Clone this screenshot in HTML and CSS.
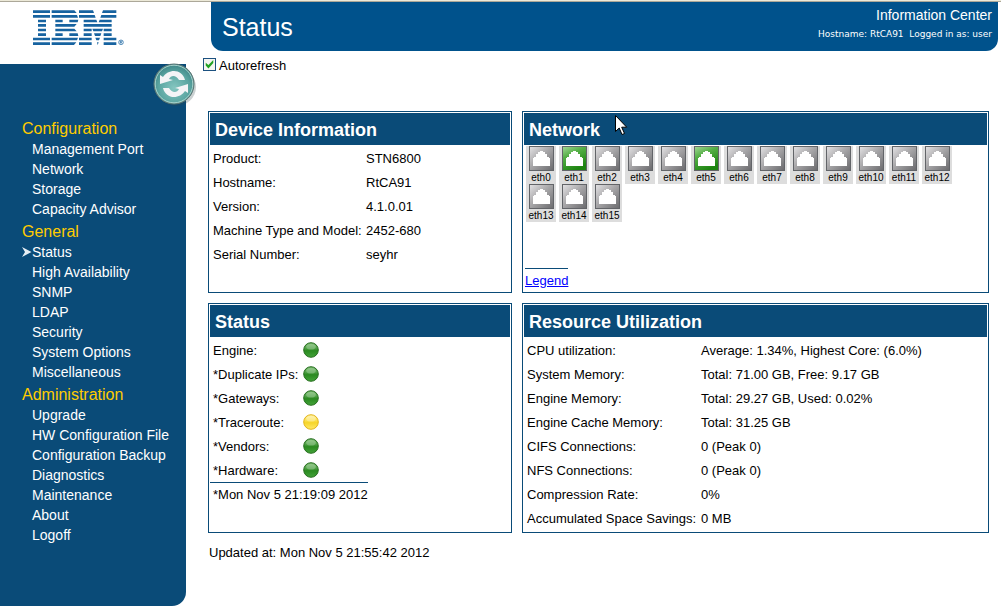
FILE: index.html
```html
<!DOCTYPE html>
<html lang="en">
<head>
<meta charset="utf-8">
<title>Information Center - Status</title>
<link rel="stylesheet" href="styles.css">
</head>
<body>
<svg class="defs" width="0" height="0" aria-hidden="true">
  <defs>
    <linearGradient id="grey" x1="0" y1="0" x2="1" y2="1"><stop offset="0" stop-color="#e4e3e5"/><stop offset=".45" stop-color="#a9a8aa"/><stop offset="1" stop-color="#69696c"/></linearGradient>
    <linearGradient id="green" x1="0" y1="0" x2="0.5" y2="1"><stop offset="0" stop-color="#a4d898"/><stop offset=".4" stop-color="#55af46"/><stop offset="1" stop-color="#1d8410"/></linearGradient>
    <linearGradient id="okball" x1="0" y1="0" x2="0" y2="1"><stop offset="0" stop-color="#78bb6c"/><stop offset=".4" stop-color="#4a9e40"/><stop offset=".55" stop-color="#2a8a20"/><stop offset="1" stop-color="#43a339"/></linearGradient>
    <linearGradient id="warnball" x1="0" y1="0" x2="0" y2="1"><stop offset="0" stop-color="#fff0a0"/><stop offset=".4" stop-color="#fbe04d"/><stop offset=".55" stop-color="#f6d52a"/><stop offset="1" stop-color="#ffe968"/></linearGradient>
    <radialGradient id="teal" cx=".5" cy=".6" r=".6"><stop offset="0" stop-color="#85c6c0"/><stop offset=".65" stop-color="#5aa5a1"/><stop offset="1" stop-color="#3d8385"/></radialGradient>
    <symbol id="port" viewBox="0 0 25 25"><rect x=".5" y=".5" width="24" height="24" stroke="#626468"/><path fill="#fff" d="M4 20V12H5V11H7V8H9V6H11V5H14V6H16V8H18V11H20V12H21V20Z"/></symbol>
    <symbol id="ok" viewBox="0 0 16 16"><circle cx="8" cy="8" r="7.3" fill="url(#okball)" stroke="#286f20"/><ellipse cx="8" cy="4.8" rx="4.8" ry="2.8" fill="#fff" opacity=".25"/></symbol>
    <symbol id="warn" viewBox="0 0 16 16"><circle cx="8" cy="8" r="7.3" fill="url(#warnball)" stroke="#e3b51a"/><ellipse cx="8" cy="4.8" rx="4.8" ry="2.8" fill="#fff" opacity=".3"/></symbol>
  </defs>
</svg>
<div class="page">
  <div class="left">
    <svg class="logo" viewBox="99 30 273 106" role="img" aria-label="IBM">
      <g fill="#1763a0">
        <path d="M99 30h51v8H99zM155 30h68l7 8H155zM237 30h42l3 8H237zM309 30h40v8H306z"/>
        <path d="M99 44h51v8H99zM155 44h76l3 8H155zM237 44h47l3 8H237zM304 44h45v8H301z"/>
        <path d="M114 58h24v8H114zM166 58h22v8H166zM208 58h27l-2 8H208zM251 58h38l3 8H251zM299 58h36v8H296z"/>
        <path d="M114 71h24v8H114zM166 71h64l-7 8H166zM251 71h43l2 5l-2 3H251zM295 71h40v8H290z"/>
        <path d="M114 85h24v8H114zM166 85h57l7 8H166zM251 85h24v8H251zM277 85h32l-3 8H280zM311 85h24v8H311z"/>
        <path d="M114 99h24v8H114zM166 99h22v8H166zM208 99h25l2 8H208zM251 99h24v8H251zM282 99h22l-3 8H285zM311 99h24v8H311z"/>
        <path d="M99 112h51v8H99zM155 112h79l-3 8H155zM237 112h38v8H237zM286 112h14l-3 8H289zM311 112h38v8H311z"/>
        <path d="M99 126h51v8H99zM155 126h74l-7 8H155zM237 126h38v8H237zM291 126h5l-3 8zM311 126h38v8H311z"/>
      </g>
      <circle cx="363" cy="126" r="7" fill="none" stroke="#1763a0" stroke-width="2"/>
      <path d="M361 130v-8h3a2 2 0 0 1 0 4h-3m3 0l2 4" fill="none" stroke="#1763a0" stroke-width="2"/>
    </svg>
    <div class="sidebar">
      <button class="refresh" type="button" aria-label="Refresh">
        <svg viewBox="0 0 44 46">
          <ellipse cx="23" cy="24" rx="20" ry="19" fill="#30484a" opacity=".25"/>
          <circle cx="21" cy="21" r="20" fill="url(#teal)" stroke="#5f7472"/>
          <circle cx="21" cy="21" r="18.8" fill="none" stroke="#a9d2cc" stroke-width="1"/>
          <path id="half" fill="#f4f4f6" d="M7 12l3 2C15 6 29 5 32 17H26C23 12 18 12 16 16l4 1-13 4z"/>
          <use href="#half" transform="rotate(180 21 21)"/>
        </svg>
      </button>
      <nav class="menu">
        <section><h2>Configuration</h2>
          <a href="#">Management Port</a><a href="#">Network</a><a href="#">Storage</a><a href="#">Capacity Advisor</a></section>
        <section><h2>General</h2>
          <a class="current" href="#" aria-current="page"><svg viewBox="0 0 10 10"><path fill="#e6eef4" d="M0 0l9.500 5-9.500 5 3-5z"/></svg>Status</a><a href="#">High Availability</a><a href="#">SNMP</a><a href="#">LDAP</a><a href="#">Security</a><a href="#">System Options</a><a href="#">Miscellaneous</a></section>
        <section><h2>Administration</h2>
          <a href="#">Upgrade</a><a href="#">HW Configuration File</a><a href="#">Configuration Backup</a><a href="#">Diagnostics</a><a href="#">Maintenance</a><a href="#">About</a><a href="#">Logoff</a></section>
      </nav>
    </div>
  </div>
  <main class="main">
    <header class="banner">
      <h1>Status</h1>
      <div class="session"><div class="product">Information Center</div><div class="user">Hostname: RtCA91 &nbsp;Logged in as: user</div></div>
    </header>
    <label class="auto"><input type="checkbox" checked>Autorefresh</label>
    <div class="panels">
      <section class="panel">
        <h2>Device Information</h2>
        <table class="device">
          <tr><th>Product:</th><td>STN6800</td></tr>
          <tr><th>Hostname:</th><td>RtCA91</td></tr>
          <tr><th>Version:</th><td>4.1.0.01</td></tr>
          <tr><th>Machine Type and Model:</th><td>2452-680</td></tr>
          <tr><th>Serial Number:</th><td>seyhr</td></tr>
        </table>
      </section>
      <section class="panel">
        <h2>Network</h2>
        <svg class="pointer" viewBox="0 0 13 21" aria-hidden="true"><path fill="#fff" stroke="#000" d="M.5 1.500v16l3.700-3.500 2.800 6.500 2.500-1-2.800-6.300h5z"/></svg>
        <ul class="ports">
          <li><svg fill="url(#grey)"><use href="#port"/></svg>eth0</li>
          <li><svg fill="url(#green)"><use href="#port"/></svg>eth1</li>
          <li><svg fill="url(#grey)"><use href="#port"/></svg>eth2</li>
          <li><svg fill="url(#grey)"><use href="#port"/></svg>eth3</li>
          <li><svg fill="url(#grey)"><use href="#port"/></svg>eth4</li>
          <li><svg fill="url(#green)"><use href="#port"/></svg>eth5</li>
          <li><svg fill="url(#grey)"><use href="#port"/></svg>eth6</li>
          <li><svg fill="url(#grey)"><use href="#port"/></svg>eth7</li>
          <li><svg fill="url(#grey)"><use href="#port"/></svg>eth8</li>
          <li><svg fill="url(#grey)"><use href="#port"/></svg>eth9</li>
          <li><svg fill="url(#grey)"><use href="#port"/></svg>eth10</li>
          <li><svg fill="url(#grey)"><use href="#port"/></svg>eth11</li>
          <li><svg fill="url(#grey)"><use href="#port"/></svg>eth12</li>
          <li><svg fill="url(#grey)"><use href="#port"/></svg>eth13</li>
          <li><svg fill="url(#grey)"><use href="#port"/></svg>eth14</li>
          <li><svg fill="url(#grey)"><use href="#port"/></svg>eth15</li>
        </ul>
        <div class="legend"><a href="#">Legend</a></div>
      </section>
      <section class="panel">
        <h2>Status</h2>
        <table class="health">
          <tr><th>Engine:</th><td><svg role="img" aria-label="OK"><use href="#ok"/></svg></td></tr>
          <tr><th>*Duplicate IPs:</th><td><svg role="img" aria-label="OK"><use href="#ok"/></svg></td></tr>
          <tr><th>*Gateways:</th><td><svg role="img" aria-label="OK"><use href="#ok"/></svg></td></tr>
          <tr><th>*Traceroute:</th><td><svg role="img" aria-label="Warning"><use href="#warn"/></svg></td></tr>
          <tr><th>*Vendors:</th><td><svg role="img" aria-label="OK"><use href="#ok"/></svg></td></tr>
          <tr><th>*Hardware:</th><td><svg role="img" aria-label="OK"><use href="#ok"/></svg></td></tr>
        </table>
        <p class="checked">*Mon Nov 5 21:19:09 2012</p>
      </section>
      <section class="panel">
        <h2>Resource Utilization</h2>
        <table class="usage">
          <tr><th>CPU utilization:</th><td>Average: 1.34%, Highest Core: (6.0%)</td></tr>
          <tr><th>System Memory:</th><td>Total: 71.00 GB, Free: 9.17 GB</td></tr>
          <tr><th>Engine Memory:</th><td>Total: 29.27 GB, Used: 0.02%</td></tr>
          <tr><th>Engine Cache Memory:</th><td>Total: 31.25 GB</td></tr>
          <tr><th>CIFS Connections:</th><td>0 (Peak 0)</td></tr>
          <tr><th>NFS Connections:</th><td>0 (Peak 0)</td></tr>
          <tr><th>Compression Rate:</th><td>0%</td></tr>
          <tr><th>Accumulated Space Savings:</th><td>0 MB</td></tr>
        </table>
      </section>
    </div>
    <p class="updated">Updated at: Mon Nov 5 21:55:42 2012</p>
  </main>
</div>
</body>
</html>
```
FILE: styles.css
```css
* { box-sizing: border-box; }
body { margin: 0; background: #fff; color: #000; font: 13px/24px "Liberation Sans", Arial, sans-serif; border-top: 1px solid #ece9d8; }
h1, h2, p, ul { margin: 0; padding: 0; }
.defs { position: absolute; }
.page { display: grid; grid-template-columns: 186px 1fr; align-items: start; border-top: 1px solid #aca899; }
.logo { display: block; width: 91px; height: 36px; margin: 8px 0 18px 33px; }
.sidebar { position: relative; padding: 53px 0 61px; background: #0a4b78; border-radius: 0 0 14px 0; }
.refresh { position: absolute; top: -1px; right: -11px; width: 44px; height: 46px; padding: 0; border: 0; background: none; }
.refresh svg { display: block; width: 44px; height: 46px; }
.menu { display: flex; flex-direction: column; gap: 1px; }
.menu h2 { padding: 2px 0 0 22px; font-size: 16px; line-height: 20px; font-weight: 400; color: #fc0; }
.menu a { display: flex; align-items: center; padding-left: 32px; font-size: 14px; line-height: 20px; color: #fff; text-decoration: none; }
.menu .current { padding-left: 22px; }
.current svg { width: 10px; height: 10px; }
.banner { display: flex; justify-content: space-between; height: 49px; margin: 0 3px 0 25px; padding: 4px 6px 0 11px; background: #00528c; color: #fff; border-radius: 0 0 12px 12px; }
.banner h1 { font-size: 25px; line-height: 42px; font-weight: 400; }
.session { text-align: right; }
.product { font-size: 14px; line-height: 18px; }
.user { font-family: "DejaVu Sans", Verdana, sans-serif; font-size: 9px; line-height: 20px; }
.auto { display: flex; width: fit-content; align-items: center; gap: 3px; margin: 3px 0 0 17px; }
.auto input { appearance: none; width: 13px; height: 13px; margin: 0 0 4px; border: 1px solid #1c5180; background: #f5f5f1; display: grid; place-items: center; }
.auto input:checked::before { content: ""; width: 9px; height: 9px; background: #21a121; clip-path: polygon(8% 35%, 38% 62%, 92% 5%, 92% 40%, 38% 100%, 8% 68%); }
.panels { display: grid; grid-template-columns: 304fr 467fr; grid-template-rows: minmax(182px, auto) auto; gap: 10px; margin: 33px 12px 0 22px; }
.panel { position: relative; display: flex; flex-direction: column; padding: 1px 1px 2px; border: 1px solid #0a4b78; }
.panel h2 { margin-bottom: 1px; padding: 2px 0 0 5px; background: #0a4b78; color: #fff; font-size: 18px; line-height: 30px; }
table { border-collapse: collapse; width: 100%; table-layout: fixed; }
th, td { padding: 2px 0 0; height: 24px; line-height: 22px; text-align: left; font-weight: 400; white-space: nowrap; }
th { padding-left: 3px; }
.device th { width: 156px; }
.health th { width: 93px; }
.health td { padding: 0; }
.usage th { width: 177px; }
.health svg { display: block; width: 16px; height: 16px; }
.checked { width: fit-content; padding-left: 3px; border-top: 1px solid #0a4b78; }
.ports { display: flex; flex-wrap: wrap; column-gap: 3px; padding: 0 22px 0 2px; list-style: none; }
.ports li { display: flex; flex-direction: column; align-items: center; width: 30px; height: 38px; background: #ddd; font-size: 10px; line-height: 14px; }
.ports svg { flex: none; width: 25px; height: 25px; }
.legend { width: fit-content; margin: auto 0 0 1px; padding-top: 2px; border-top: 1px solid #0a4b78; line-height: 19px; }
.legend a { color: #00f; }
.pointer { position: absolute; top: 2px; left: 92px; width: 13px; height: 21px; }
.updated { margin: 8px 0 0 23px; }
```
